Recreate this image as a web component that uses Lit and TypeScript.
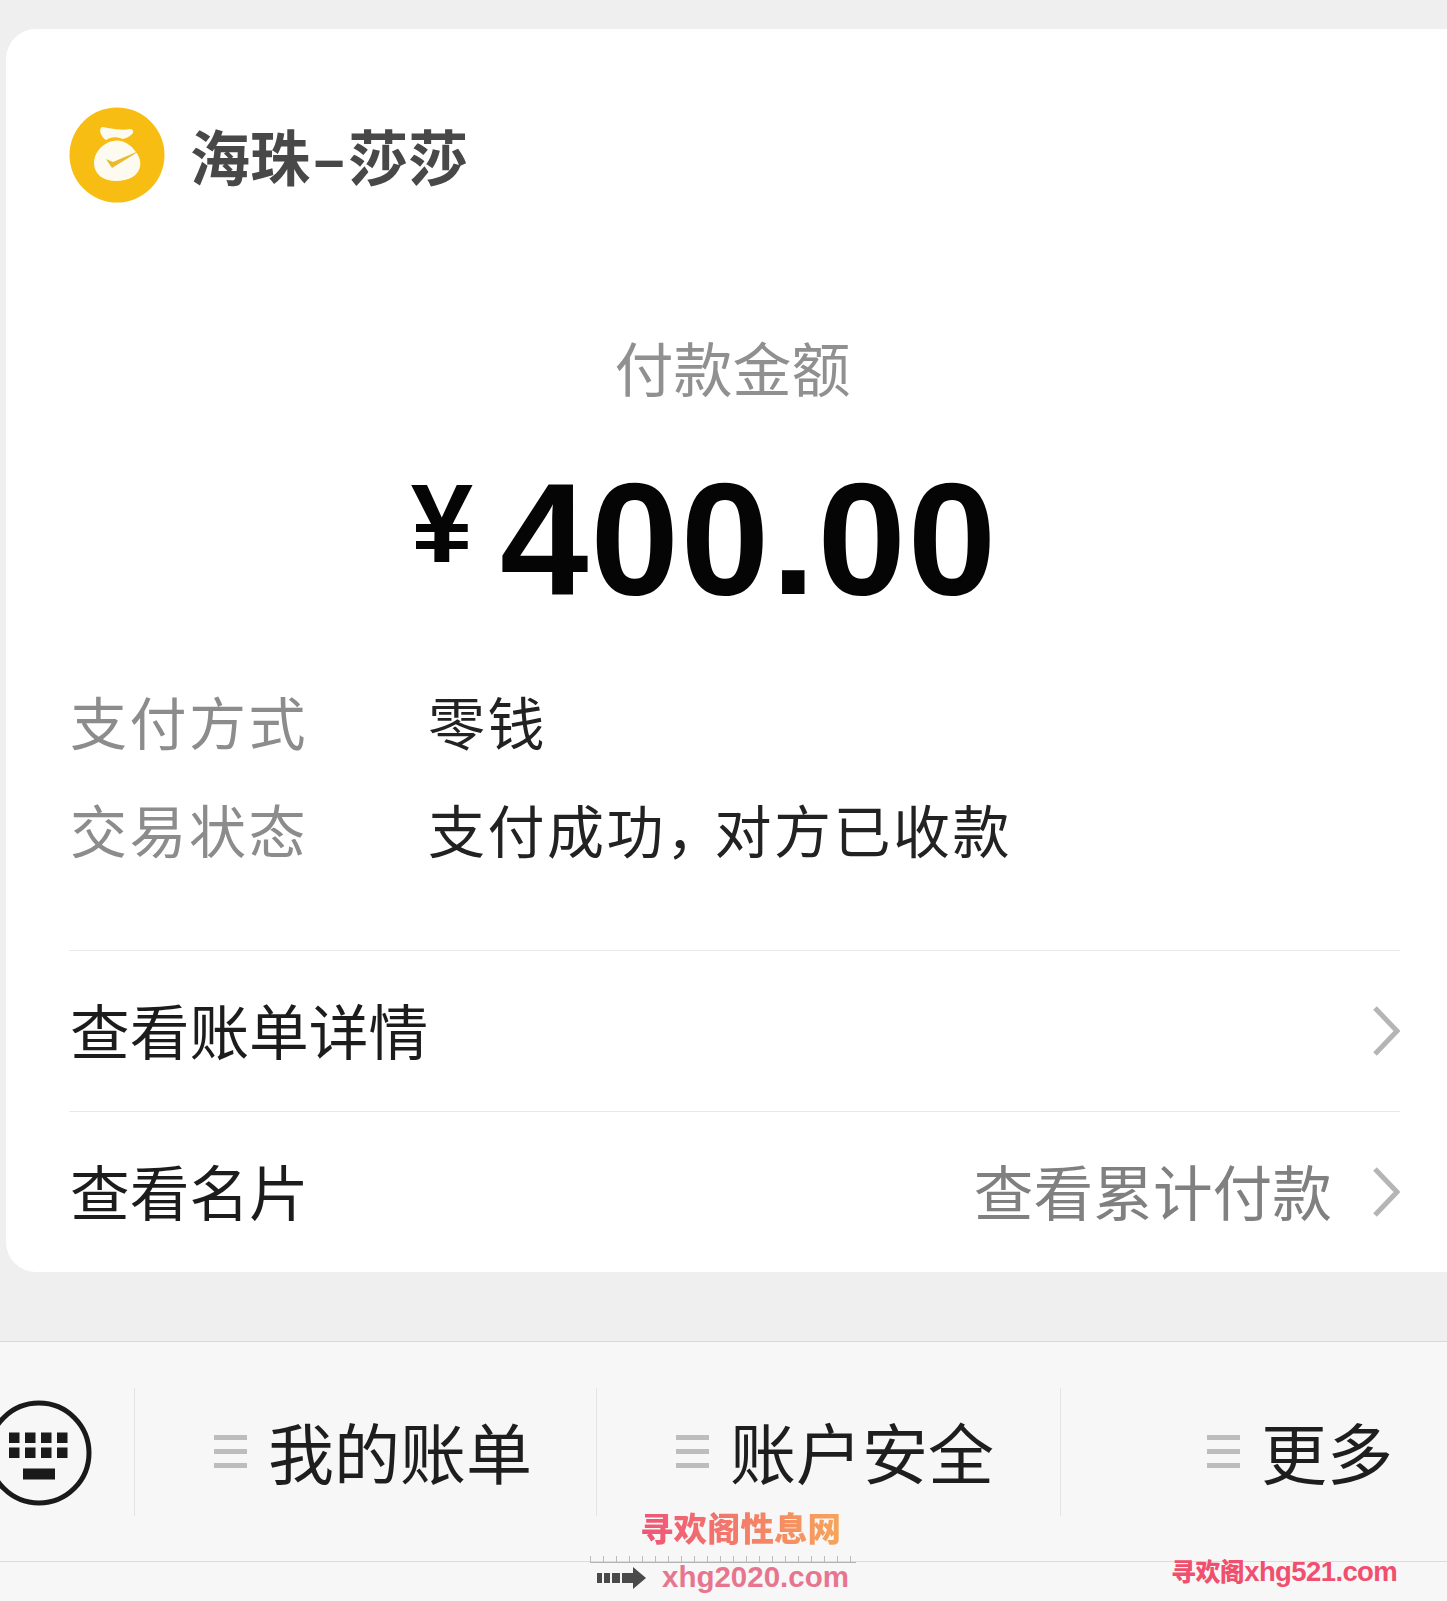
import { LitElement, html, css, svg } from "lit";
import { customElement } from "lit/decorators.js";

const chevron = html`<svg class="chev" viewBox="0 0 28 52" aria-hidden="true"><path d="M3 3 L25 26 L3 49" fill="none" stroke="#b5b5b5" stroke-width="5"/></svg>`;
const menu = html`<span class="menu"><i></i><i></i><i></i></span>`;
const keys = [0, 1, 2, 3].flatMap((c) => [0, 1].map((r) => svg`<rect x=${9 + c * 16} y=${34.5 + r * 15} width="10.5" height="10.5" fill="#1a1a1a"/>`));

@customElement("app-root")
export class AppRoot extends LitElement {
  static styles = css`
    :host {
      display: block;
      position: relative;
      width: 1447px;
      height: 1601px;
      overflow: hidden;
      background: #efefef;
      font-family: "Noto Sans CJK SC", "Noto Sans", sans-serif;
      color: #1c1c1c;
    }
    .page { display: flex; flex-direction: column; height: 100%; }
    .card {
      box-sizing: border-box;
      height: 1243px;
      margin: 29px -40px 0 6px;
      padding: 78px 87px 0 63px;
      background: #fff;
      border-radius: 30px;
      display: flex;
      flex-direction: column;
    }
    .head { display: flex; align-items: center; gap: 25px; height: 96px; }
    .logo { width: 96px; height: 96px; flex: none; }
    .name { font-size: 60px; line-height: 96px; font-weight: 700; color: #484848; white-space: nowrap; }
    .dash { display: inline-block; margin: 0 8px; font-weight: 700; transform: scaleX(1.65); }
    .title {
      margin-top: 124px;
      text-align: center;
      font-size: 59px;
      line-height: 80px;
      color: #909090;
      padding-right: 4px;
    }
    .amount {
      display: flex;
      align-items: flex-start;
      justify-content: center;
      margin-top: 57px;
      height: 150px;
      padding-right: 60px;
      color: #050505;
      font-family: "Liberation Sans", Arial, sans-serif;
      font-weight: 700;
      line-height: 150px;
    }
    .yen { font-size: 112px; line-height: 120px; margin-right: 27px; }
    .num { font-size: 159px; letter-spacing: 2px; }
    .kv { display: grid; grid-template-columns: 358px 1fr; row-gap: 28px; margin-top: 66px; font-size: 57px; line-height: 80px; padding-left: 1px; }
    .kv .k { color: #8c8c8c; letter-spacing: 2.5px; }
    .kv .v { color: #222; letter-spacing: 2.5px; white-space: nowrap; }
    .kv .c { letter-spacing: -8.5px; }
    .row {
      display: flex;
      align-items: center;
      height: 161px;
      font-size: 59.7px;
      border-top: 1.5px solid #e9e9e9;
      box-sizing: border-box;
      padding-left: 1px;
      white-space: nowrap;
    }
    .rows { margin-top: 82px; }
    .row span { padding-bottom: 4px; }
    .row .grow { flex: 1; }
    .row .side { color: #808080; margin-right: 40px; }
    .chev { width: 28px; height: 52px; flex: none; }
    .bar {
      flex: 1;
      margin-top: 69px;
      background: #f7f7f7;
      border-top: 1.5px solid #d9d9d9;
      display: flex;
      flex-direction: column;
    }
    .tabs { box-sizing: border-box; height: 220px; display: grid; grid-template-columns: 134px 462px 464px 1fr; align-items: center; border-bottom: 1.5px solid #dcdcdc; }
    .kbd { width: 134px; height: 108px; display: block; }
    .tab { position: relative; display: flex; align-items: center; gap: 21px; height: 128px; border-left: 1.5px solid #e4e4e4; padding-left: 79px; font-size: 66px; color: #1e1e1e; white-space: nowrap; }
    .tab span:last-child { padding-bottom: 4px; }
    .tab.last { padding-left: 146px; }
    .menu { display: flex; flex-direction: column; gap: 9px; width: 33px; flex: none; }
    .menu i { display: block; height: 5px; background: #bdbdbd; }
    .wm { position: absolute; font-family: "Noto Sans CJK SC", sans-serif; font-weight: 900; white-space: nowrap; }
    .wm1 {
      left: 640px; top: 1504px; font-size: 33.5px; line-height: 46px;
      background: linear-gradient(90deg, #ef5478, #f6a55a);
      -webkit-background-clip: text; background-clip: text; color: transparent;
    }
    .ruler {
      position: absolute; left: 590px; top: 1556px; width: 266px; height: 6px;
      border-bottom: 1.5px solid #b4b4b4;
      background: repeating-linear-gradient(90deg, #bcbcbc 0 1px, transparent 1px 13px);
    }
    .arrow { position: absolute; left: 597px; top: 1566px; width: 50px; height: 24px; }
    .wm2 { left: 662px; top: 1559px; font-family: "Liberation Sans", sans-serif; font-weight: 700; font-size: 29.5px; line-height: 36px; color: #e8758f; }
    .wm3 { left: 1171px; top: 1552px; font-size: 25px; line-height: 36px; color: #f0506e; letter-spacing: -0.6px; }
    .wm3 b { font-family: "Liberation Sans", sans-serif; font-weight: 700; font-size: 27.5px; }
  `;

  render() {
    return html`
      <div class="page">
        <section class="card">
          <div class="head">
            <svg class="logo" viewBox="0 0 96 96" aria-hidden="true">
              <circle cx="48" cy="48" r="47.5" fill="#f7bd12"/>
              <path d="M33 20 C40 21 52 24 61 22 C65 22 65 26 62 28 C60 30 57 31 54 32 C47 29 41 30 37 33 C32 30 29 22 33 20 Z" fill="#fdfbf0"/>
              <path d="M40 35 C50 31 60 35 67 45 C71 50 72 56 71 60 C69 69 59 74 47 74 C34 74 25 67 25 56 C25 47 31 39 40 35 Z" fill="#fdfbf0"/>
              <path d="M37 52 L43 61 L72 43 L44 55 Z" fill="#e9b92e"/>
            </svg>
            <div class="name">海珠<span class="dash">-</span>莎莎</div>
          </div>
          <div class="title">付款金额</div>
          <div class="amount"><span class="yen">¥</span><span class="num">400.00</span></div>
          <div class="kv">
            <div class="k">支付方式</div><div class="v">零钱</div>
            <div class="k">交易状态</div><div class="v">支付成功<span class="c">，</span>对方已收款</div>
          </div>
          <div class="rows">
            <div class="row"><span class="grow">查看账单详情</span>${chevron}</div>
            <div class="row"><span class="grow">查看名片</span><span class="side">查看累计付款</span>${chevron}</div>
          </div>
        </section>
        <footer class="bar">
          <div class="tabs">
            <svg class="kbd" viewBox="0 0 134 108" aria-hidden="true">
              <circle cx="39" cy="55" r="50" fill="none" stroke="#1a1a1a" stroke-width="5"/>
              ${keys}
              <rect x="23" y="70.5" width="32" height="11" fill="#1a1a1a"/>
            </svg>
            <div class="tab">${menu}<span>我的账单</span></div>
            <div class="tab">${menu}<span>账户安全</span></div>
            <div class="tab last">${menu}<span>更多</span></div>
          </div>
        </footer>
      </div>
      <div class="wm wm1">寻欢阁性息网</div>
      <div class="ruler"></div>
      <svg class="arrow" viewBox="0 0 50 24" aria-hidden="true">
        <path d="M0 7h5v10H0zM7 7h6v10H7zM15 7h8v10h-8zM25 7h11V1l13 11-13 11v-6H25z" fill="#4a4a4a"/>
      </svg>
      <div class="wm wm2">xhg2020.com</div>
      <div class="wm wm3">寻欢阁<b>xhg521.com</b></div>
    `;
  }
}
